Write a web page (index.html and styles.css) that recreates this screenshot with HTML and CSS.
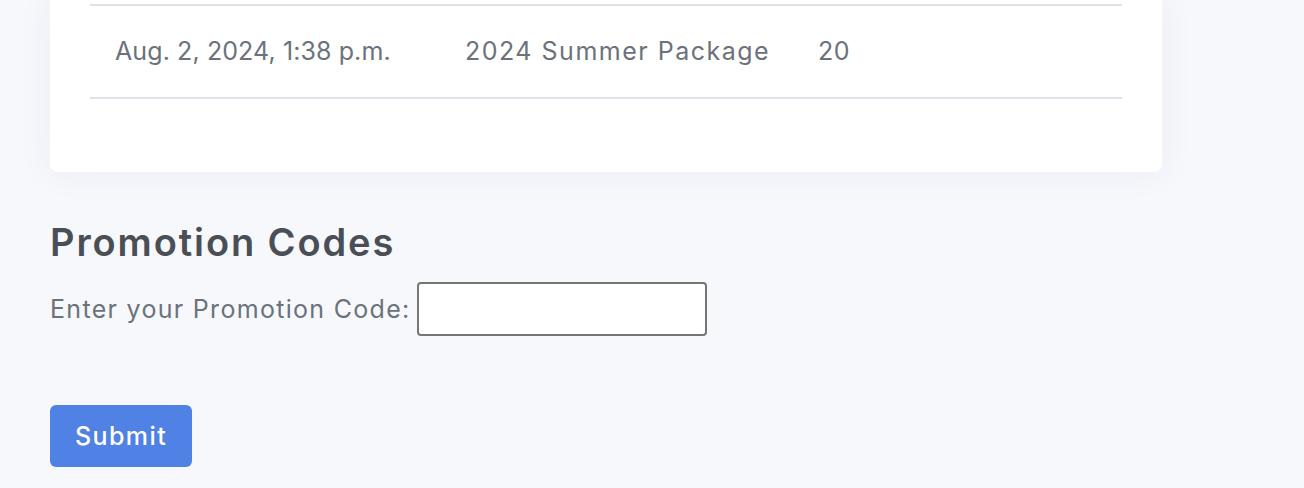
FILE: index.html
```html
<!DOCTYPE html>
<html lang="en">
<head>
<meta charset="utf-8">
<title>Promotion Codes</title>
<link rel="stylesheet" href="styles.css">
</head>
<body>
<main class="page">
  <section class="card">
    <table class="history">
      <tbody>
        <tr>
          <td class="col-date">Aug. 2, 2024, 1:38 p.m.</td>
          <td class="col-package">2024 Summer Package</td>
          <td class="col-credits">20</td>
        </tr>
      </tbody>
    </table>
  </section>

  <section class="promo">
    <h2 class="promo-title">Promotion Codes</h2>
    <form class="promo-form">
      <div class="promo-row">
        <label class="promo-label" for="code">Enter your Promotion Code:</label>
        <input class="promo-input" id="code" type="text">
      </div>
      <button class="btn-submit" type="button">Submit</button>
    </form>
  </section>
</main>
</body>
</html>
```
FILE: styles.css
```css
* { box-sizing: border-box; }

html, body {
  margin: 0;
  padding: 0;
  background: #f7f8fc;
  font-family: "Inter", "Open Sans", sans-serif;
  overflow: hidden;
}

.page {
  padding: 0 142px 0 50px;
  width: 1304px;
}

.card {
  background: #ffffff;
  border-radius: 0 0 8px 8px;
  box-shadow: 0 0 36px rgba(40, 55, 110, 0.06);
  padding: 4px 40px 73px;
  width: 1112px;
}

.history {
  width: 100%;
  border-collapse: collapse;
  table-layout: fixed;
}

.history td {
  border-top: 2px solid #dee3e9;
  border-bottom: 2px solid #dee3e9;
  height: 93px;
  padding: 0 0 2px 25px;
  color: #6b727b;
  font-size: 25px;
  line-height: 30px;
  vertical-align: middle;
  white-space: nowrap;
}

.col-date { width: 350px; letter-spacing: 0.1px; }
.col-package { width: 353px; letter-spacing: 1.5px; }
.col-credits { letter-spacing: 0.4px; }

.promo {
  padding-top: 47px;
}

.promo-title {
  margin: 0;
  color: #4a4f56;
  font-size: 38px;
  font-weight: 600;
  line-height: 46px;
  letter-spacing: 1.9px;
}

.promo-form {
  display: flex;
  flex-direction: column;
  align-items: flex-start;
}

.promo-row {
  display: flex;
  align-items: center;
  gap: 6px;
  margin-top: 17px;
}

.promo-label {
  color: #6b727b;
  font-size: 25px;
  line-height: 30px;
  letter-spacing: 1.3px;
}

.promo-input {
  width: 290px;
  height: 54px;
  border: 2px solid #767676;
  border-radius: 4px;
  background: #ffffff;
  font-family: inherit;
  font-size: 22px;
  padding: 0 8px;
}

.btn-submit {
  margin-top: 69px;
  height: 62px;
  padding: 0 25px;
  border: none;
  border-radius: 6px;
  background: #5081e4;
  color: #ffffff;
  font-family: inherit;
  font-size: 25px;
  font-weight: 500;
  letter-spacing: 1.4px;
  cursor: pointer;
}
```
